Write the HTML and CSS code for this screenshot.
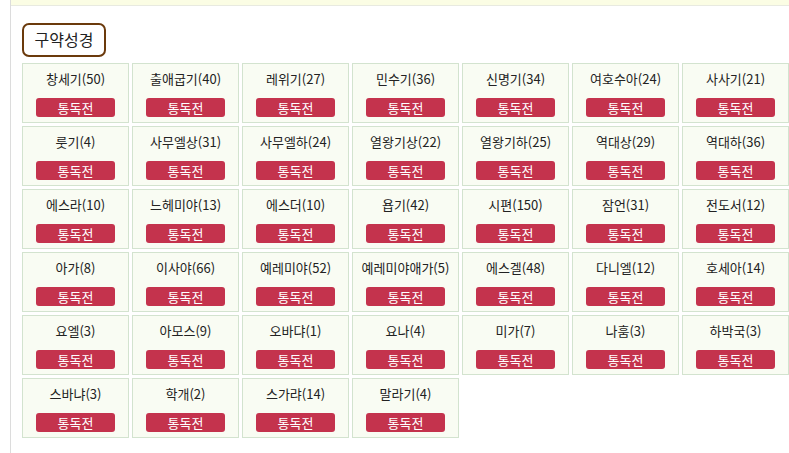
FILE: index.html
```html
<!DOCTYPE html>
<html lang="ko">
<head>
<meta charset="UTF-8">
<title>구약성경</title>
<link rel="stylesheet" href="styles.css">
</head>
<body>
<div class="wrap">
  <div class="topbar"></div>
  <div class="content">
    <div class="heading">구약성경</div>
    <div class="books">
      <div class="book"><div class="name">창세기(50)</div><a class="btn">통독전</a></div>
      <div class="book"><div class="name">출애굽기(40)</div><a class="btn">통독전</a></div>
      <div class="book"><div class="name">레위기(27)</div><a class="btn">통독전</a></div>
      <div class="book"><div class="name">민수기(36)</div><a class="btn">통독전</a></div>
      <div class="book"><div class="name">신명기(34)</div><a class="btn">통독전</a></div>
      <div class="book"><div class="name">여호수아(24)</div><a class="btn">통독전</a></div>
      <div class="book"><div class="name">사사기(21)</div><a class="btn">통독전</a></div>

      <div class="book"><div class="name">룻기(4)</div><a class="btn">통독전</a></div>
      <div class="book"><div class="name">사무엘상(31)</div><a class="btn">통독전</a></div>
      <div class="book"><div class="name">사무엘하(24)</div><a class="btn">통독전</a></div>
      <div class="book"><div class="name">열왕기상(22)</div><a class="btn">통독전</a></div>
      <div class="book"><div class="name">열왕기하(25)</div><a class="btn">통독전</a></div>
      <div class="book"><div class="name">역대상(29)</div><a class="btn">통독전</a></div>
      <div class="book"><div class="name">역대하(36)</div><a class="btn">통독전</a></div>

      <div class="book"><div class="name">에스라(10)</div><a class="btn">통독전</a></div>
      <div class="book"><div class="name">느헤미야(13)</div><a class="btn">통독전</a></div>
      <div class="book"><div class="name">에스더(10)</div><a class="btn">통독전</a></div>
      <div class="book"><div class="name">욥기(42)</div><a class="btn">통독전</a></div>
      <div class="book"><div class="name">시편(150)</div><a class="btn">통독전</a></div>
      <div class="book"><div class="name">잠언(31)</div><a class="btn">통독전</a></div>
      <div class="book"><div class="name">전도서(12)</div><a class="btn">통독전</a></div>

      <div class="book"><div class="name">아가(8)</div><a class="btn">통독전</a></div>
      <div class="book"><div class="name">이사야(66)</div><a class="btn">통독전</a></div>
      <div class="book"><div class="name">예레미야(52)</div><a class="btn">통독전</a></div>
      <div class="book"><div class="name">예레미야애가(5)</div><a class="btn">통독전</a></div>
      <div class="book"><div class="name">에스겔(48)</div><a class="btn">통독전</a></div>
      <div class="book"><div class="name">다니엘(12)</div><a class="btn">통독전</a></div>
      <div class="book"><div class="name">호세아(14)</div><a class="btn">통독전</a></div>

      <div class="book"><div class="name">요엘(3)</div><a class="btn">통독전</a></div>
      <div class="book"><div class="name">아모스(9)</div><a class="btn">통독전</a></div>
      <div class="book"><div class="name">오바댜(1)</div><a class="btn">통독전</a></div>
      <div class="book"><div class="name">요나(4)</div><a class="btn">통독전</a></div>
      <div class="book"><div class="name">미가(7)</div><a class="btn">통독전</a></div>
      <div class="book"><div class="name">나훔(3)</div><a class="btn">통독전</a></div>
      <div class="book"><div class="name">하박국(3)</div><a class="btn">통독전</a></div>

      <div class="book"><div class="name">스바냐(3)</div><a class="btn">통독전</a></div>
      <div class="book"><div class="name">학개(2)</div><a class="btn">통독전</a></div>
      <div class="book"><div class="name">스가랴(14)</div><a class="btn">통독전</a></div>
      <div class="book"><div class="name">말라기(4)</div><a class="btn">통독전</a></div>
    </div>
  </div>
</div>
</body>
</html>
```

FILE: styles.css
```css
body, html {
  margin: 0;
  padding: 0;
  background: #fff;
  font-family: "Noto Sans CJK KR", "Noto Sans", sans-serif;
  color: #222;
}
.wrap {
  margin-left: 10px;
  border-left: 1px solid #dcdcdc;
  min-height: 453px;
}
.topbar {
  height: 5px;
  background: #fbfde4;
  border-bottom: 1px solid #e8eae0;
}
.content {
  padding: 17px 0 0 11px;
}
.heading {
  display: inline-block;
  box-sizing: border-box;
  height: 34px;
  width: 84px;
  border: 2px solid #6b3a0c;
  border-radius: 7px;
  font-size: 16px;
  line-height: 29px;
  text-align: center;
  color: #222;
  margin-bottom: 6px;
}
.books {
  display: grid;
  grid-template-columns: repeat(7, 107px);
  grid-auto-rows: 60px;
  gap: 3px;
}
.book {
  box-sizing: border-box;
  border: 1px solid #d3e3cf;
  background: #f9fcf3;
  text-align: center;
  padding-top: 6px;
}
.name {
  font-size: 13px;
  line-height: 18px;
  color: #222;
}
.btn {
  display: block;
  width: 79px;
  height: 19px;
  margin: 10px auto 0;
  background: #c4334d;
  border-radius: 3px;
  color: #fff;
  font-size: 13px;
  line-height: 19px;
}
```
